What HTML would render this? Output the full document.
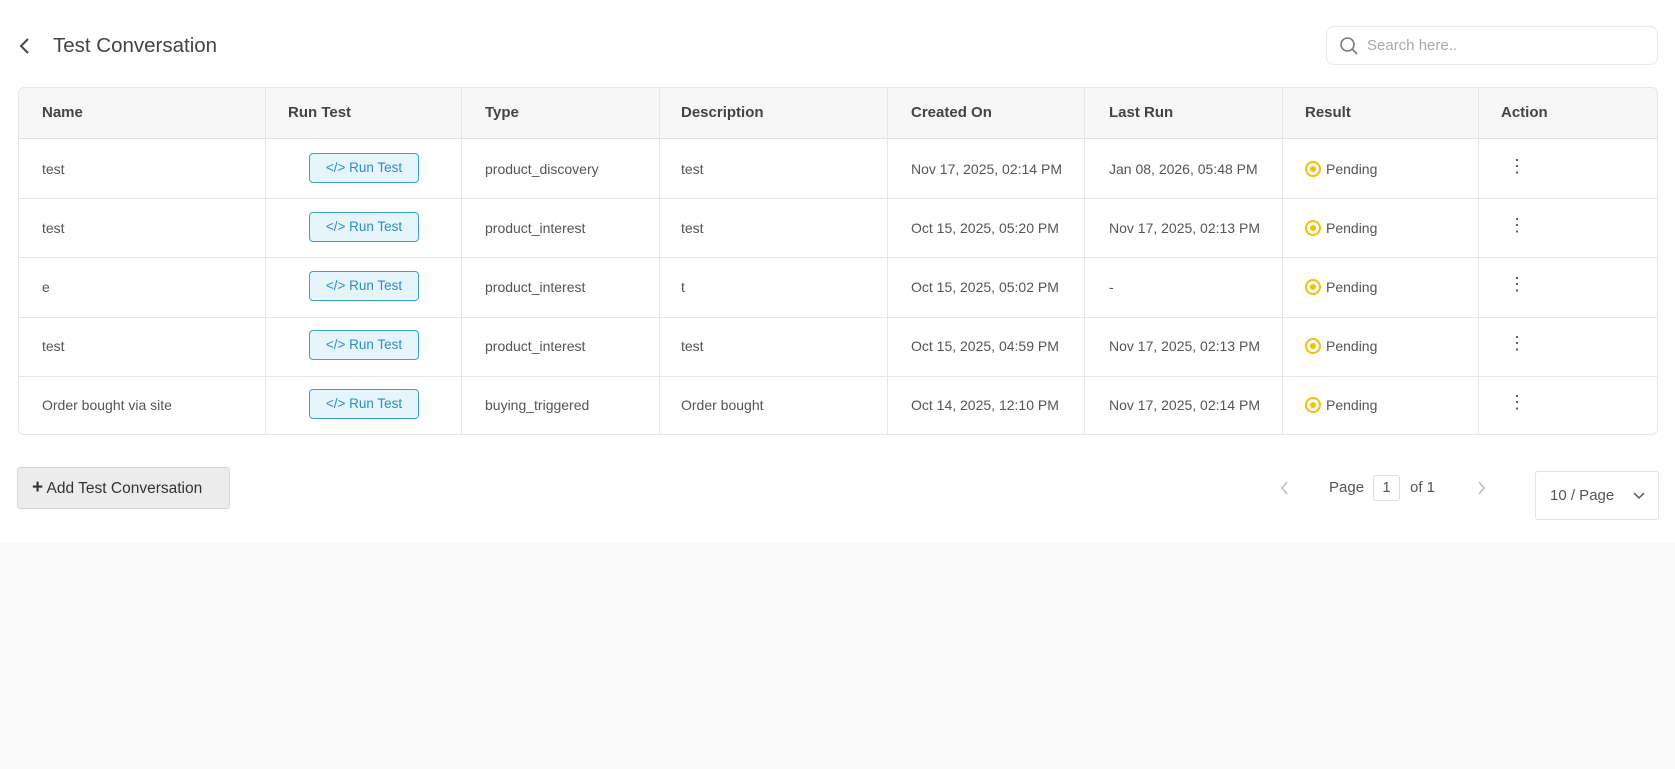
<!DOCTYPE html>
<html><head><meta charset="utf-8"><style>
*{box-sizing:border-box;margin:0;padding:0}
body{width:1675px;height:769px;background:#fafafa;font-family:"Liberation Sans",sans-serif;color:#555;position:relative;overflow:hidden}
.top{position:absolute;left:0;top:0;width:1675px;height:543px;background:#fff}
.abs{position:absolute}
.title{left:53px;top:34px;font-size:20.5px;color:#444}
.search{left:1326px;top:26px;width:332px;height:39px;border:1px solid #e8e8e8;border-radius:8px}
.search span{position:absolute;left:40px;top:10px;font-size:15px;color:#aaa}
.table{left:18px;top:87px;width:1640px;height:348px;border:1px solid #e6e6e6;border-radius:6px;overflow:hidden}
.hdr{position:absolute;left:0;top:0;width:100%;height:51px;background:#f7f7f7;border-bottom:1px solid #e3e3e3}
.vl{position:absolute;top:0;width:1px;height:100%;background:#e6e6e6}
.hl{position:absolute;left:0;width:100%;height:1px;background:#e6e6e6}
.t{position:absolute;font-size:14px;color:#555;white-space:nowrap}
.h{font-weight:bold;color:#444;font-size:15px}
.btn{position:absolute;width:110px;height:30px;border:1px solid #3ba3c9;background:#e6f5fb;border-radius:4px;color:#2a8fc0;font-size:13.5px;text-align:center;line-height:28px}
.pend{position:absolute;width:16px;height:16px;border:2px solid #f2c200;border-radius:50%;background:#fff}
.pend:after{content:"";position:absolute;left:3px;top:3px;width:6px;height:6px;border-radius:50%;background:#f2c200}
.dots{position:absolute;font-size:18px;color:#555;line-height:6px;width:6px;text-align:center}
.add{left:17px;top:467px;width:213px;height:42px;background:#ececec;border:1px solid #d8d8d8;border-radius:3px;font-size:15.5px;color:#333;line-height:40px;padding-left:14px}
</style></head><body>
<div class="top"></div>
<svg class="abs" style="left:19px;top:37px" width="12" height="18"><path d="M9 2L2 9l7 7" fill="none" stroke="#444" stroke-width="2"/></svg>
<div class="abs title">Test Conversation</div>
<div class="abs search"><svg class="abs" style="left:12px;top:9px" width="20" height="20"><circle cx="8.5" cy="8.5" r="6.5" fill="none" stroke="#777" stroke-width="1.6"/><path d="M13.5 13.5L18 18" stroke="#777" stroke-width="1.6"/></svg><span>Search here..</span></div>
<div class="abs table">
<div class="hdr"></div>
<div class="vl" style="left:246px"></div><div class="vl" style="left:442px"></div><div class="vl" style="left:640px"></div><div class="vl" style="left:868px"></div><div class="vl" style="left:1065px"></div><div class="vl" style="left:1263px"></div><div class="vl" style="left:1459px"></div>
<div class="hl" style="top:110px"></div><div class="hl" style="top:169px"></div><div class="hl" style="top:229px"></div><div class="hl" style="top:288px"></div>
<div class="t h" style="left:23px;top:16px">Name</div><div class="t h" style="left:269px;top:16px">Run Test</div><div class="t h" style="left:466px;top:16px">Type</div><div class="t h" style="left:662px;top:16px">Description</div><div class="t h" style="left:892px;top:16px">Created On</div><div class="t h" style="left:1090px;top:16px">Last Run</div><div class="t h" style="left:1286px;top:16px">Result</div><div class="t h" style="left:1482px;top:16px">Action</div>

<div class="t" style="left:23px;top:73px">test</div><div class="btn" style="left:290px;top:65px">&lt;/&gt; Run Test</div><div class="t" style="left:466px;top:73px">product_discovery</div><div class="t" style="left:662px;top:73px">test</div><div class="t" style="left:892px;top:73px">Nov 17, 2025, 02:14 PM</div><div class="t" style="left:1090px;top:73px">Jan 08, 2026, 05:48 PM</div><div class="pend" style="left:1286px;top:73px"></div><div class="t" style="left:1307px;top:73px">Pending</div><div class="dots" style="left:1489px;top:75px">⋮</div>

<div class="t" style="left:23px;top:132px">test</div><div class="btn" style="left:290px;top:124px">&lt;/&gt; Run Test</div><div class="t" style="left:466px;top:132px">product_interest</div><div class="t" style="left:662px;top:132px">test</div><div class="t" style="left:892px;top:132px">Oct 15, 2025, 05:20 PM</div><div class="t" style="left:1090px;top:132px">Nov 17, 2025, 02:13 PM</div><div class="pend" style="left:1286px;top:132px"></div><div class="t" style="left:1307px;top:132px">Pending</div><div class="dots" style="left:1489px;top:134px">⋮</div>

<div class="t" style="left:23px;top:191px">e</div><div class="btn" style="left:290px;top:183px">&lt;/&gt; Run Test</div><div class="t" style="left:466px;top:191px">product_interest</div><div class="t" style="left:662px;top:191px">t</div><div class="t" style="left:892px;top:191px">Oct 15, 2025, 05:02 PM</div><div class="t" style="left:1090px;top:191px">-</div><div class="pend" style="left:1286px;top:191px"></div><div class="t" style="left:1307px;top:191px">Pending</div><div class="dots" style="left:1489px;top:193px">⋮</div>

<div class="t" style="left:23px;top:250px">test</div><div class="btn" style="left:290px;top:242px">&lt;/&gt; Run Test</div><div class="t" style="left:466px;top:250px">product_interest</div><div class="t" style="left:662px;top:250px">test</div><div class="t" style="left:892px;top:250px">Oct 15, 2025, 04:59 PM</div><div class="t" style="left:1090px;top:250px">Nov 17, 2025, 02:13 PM</div><div class="pend" style="left:1286px;top:250px"></div><div class="t" style="left:1307px;top:250px">Pending</div><div class="dots" style="left:1489px;top:252px">⋮</div>

<div class="t" style="left:23px;top:309px">Order bought via site</div><div class="btn" style="left:290px;top:301px">&lt;/&gt; Run Test</div><div class="t" style="left:466px;top:309px">buying_triggered</div><div class="t" style="left:662px;top:309px">Order bought</div><div class="t" style="left:892px;top:309px">Oct 14, 2025, 12:10 PM</div><div class="t" style="left:1090px;top:309px">Nov 17, 2025, 02:14 PM</div><div class="pend" style="left:1286px;top:309px"></div><div class="t" style="left:1307px;top:309px">Pending</div><div class="dots" style="left:1489px;top:311px">⋮</div>
</div>
<div class="abs add"><b style="font-size:19px">+</b> Add Test Conversation</div>
<svg class="abs" style="left:1280px;top:481px" width="10" height="14"><path d="M7 1L2 7l5 6" fill="none" stroke="#bbb" stroke-width="1.4"/></svg>
<div class="abs t" style="left:1329px;top:479px;font-size:15px">Page</div>
<div class="abs" style="left:1373px;top:475px;width:27px;height:26px;border:1px solid #ddd;border-radius:3px;text-align:center;font-size:14.5px;line-height:24px;color:#555">1</div>
<div class="abs t" style="left:1410px;top:479px;font-size:15px">of 1</div>
<svg class="abs" style="left:1476px;top:481px" width="10" height="14"><path d="M3 1l5 6-5 6" fill="none" stroke="#bbb" stroke-width="1.4"/></svg>
<div class="abs" style="left:1535px;top:471px;width:124px;height:49px;border:1px solid #e3e3e3;border-radius:3px"><span class="t" style="left:14px;top:15px;font-size:15px">10 / Page</span><svg class="abs" style="left:96px;top:19px" width="14" height="10"><path d="M2 2l5 5 5-5" fill="none" stroke="#555" stroke-width="1.5"/></svg></div>
</body></html>
